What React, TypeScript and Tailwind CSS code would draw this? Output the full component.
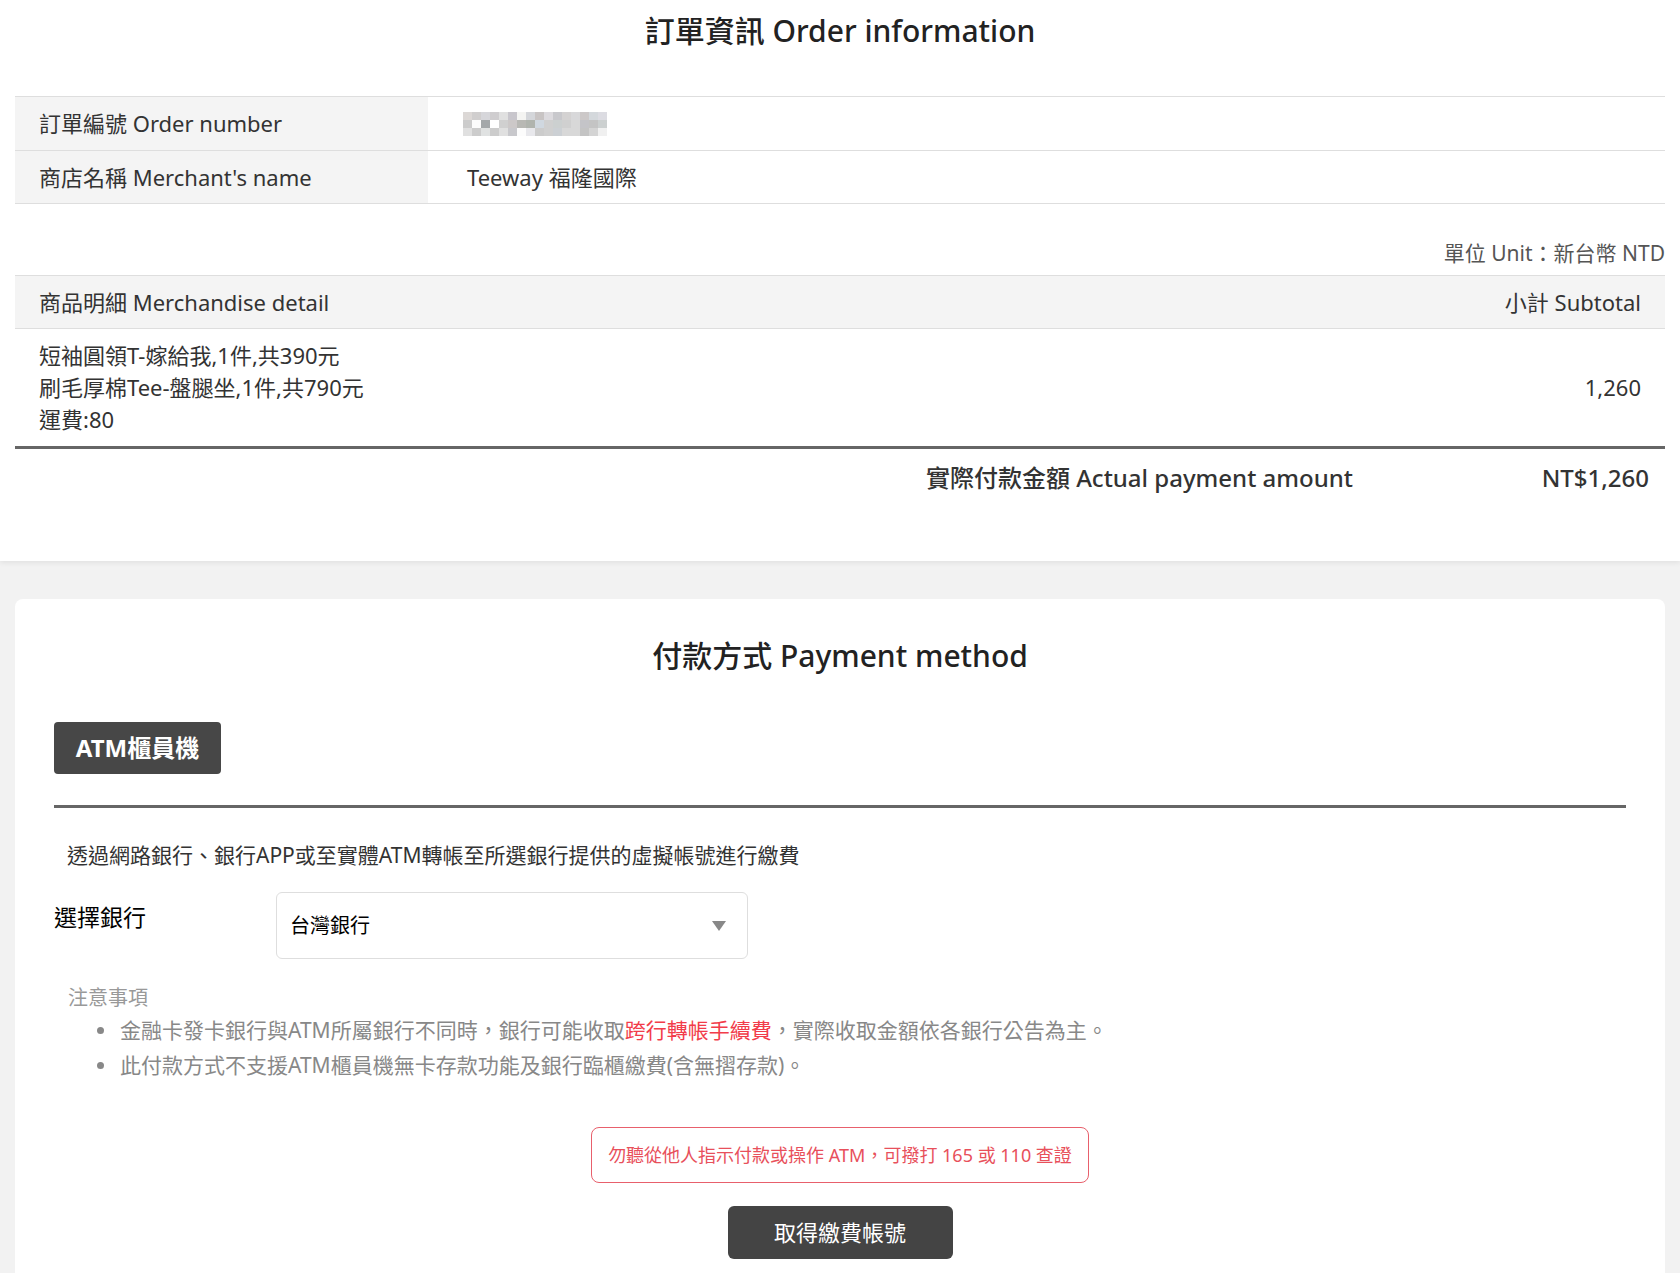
import React from "react";

const FONT = { fontFamily: '"Noto Sans", "Noto Sans CJK TC", sans-serif' };

const mosaic: string[][] = [
  ["#dcd8d6", "#d0cece", "#d6d6da", "#cfcdcf", "#e0e0e0", "#c8c6cc", "#f4f4f2", "#d4d6da", "#c8c4c4", "#dcdade", "#c8c8cc", "#d4d2d2", "#d8d8da", "#ccc8c8", "#d4d8dc", "#dcdce2"],
  ["#cccccc", "#fcfcfc", "#a4a8aa", "#ffffff", "#d0d0d0", "#ccc8c8", "#b8b8b4", "#b0b4ae", "#d0d8e0", "#d0d0d0", "#ccd0d0", "#d0d0d0", "#d8d8d8", "#c4c4c8", "#c4c4c4", "#ccd0d0"],
  ["#e0e0e0", "#cccccc", "#e0e2e2", "#cccccc", "#e0e0e0", "#c8c8cc", "#fcfcfc", "#e8e8ec", "#cccccc", "#d0d0d0", "#ccd0d4", "#d8d8d8", "#d8d8d8", "#c4c4c4", "#d4d4d4", "#f0f0f0"],
];

function Mosaic() {
  return (
    <div className="flex flex-col">
      {mosaic.map((row, i) => (
        <div key={i} className="flex">
          {row.map((c, j) => (
            <div key={j} className="w-[9px] h-[8px]" style={{ backgroundColor: c }} />
          ))}
        </div>
      ))}
    </div>
  );
}

export default function App() {
  return (
    <div className="min-h-[1273px] bg-[#f2f2f2] text-[#333]" style={FONT}>
      {/* Order info section */}
      <div className="bg-white h-[561px] px-[15px] shadow-[0_2px_5px_rgba(0,0,0,0.07)] relative">
        <div className="h-[61px] flex items-center justify-center text-[30px] font-medium text-[#222]">
          訂單資訊 Order information
        </div>
        <div className="mt-[35px] border-t border-[#dedede]">
          <div className="flex h-[54px] border-b border-[#dedede]">
            <div className="w-[413px] bg-[#f4f4f4] flex items-center pl-[24px] text-[22px]">訂單編號 Order number</div>
            <div className="flex items-center pl-[35px]">
              <Mosaic />
            </div>
          </div>
          <div className="flex h-[53px] border-b border-[#dedede]">
            <div className="w-[413px] bg-[#f4f4f4] flex items-center pl-[24px] text-[22px]">商店名稱 Merchant's name</div>
            <div className="flex items-center pl-[39px] text-[22px]">Teeway 福隆國際</div>
          </div>
        </div>
        <div className="pt-[35px] mb-[8px] text-right text-[21px] leading-[28px] text-[#555]">
          單位 Unit：新台幣 NTD
        </div>
        <div className="border-t border-b border-[#dedede] bg-[#f4f4f4] h-[54px] flex items-center justify-between px-[24px] text-[22px]">
          <span>商品明細 Merchandise detail</span>
          <span>小計 Subtotal</span>
        </div>
        <div className="flex items-center justify-between px-[24px] pt-[10px] pb-[11px] text-[22px] leading-[32px] border-b-[3px] border-[#666]">
          <div>
            <div>短袖圓領T-嫁給我,1件,共390元</div>
            <div>刷毛厚棉Tee-盤腿坐,1件,共790元</div>
            <div>運費:80</div>
          </div>
          <div>1,260</div>
        </div>
        <div className="flex justify-end pt-[13px] text-[24px] leading-[32px] font-medium text-[#333]">
          <span>實際付款金額 Actual payment amount</span>
          <span className="w-[312px] text-right pr-[16px]">NT$1,260</span>
        </div>
      </div>

      {/* Payment section */}
      <div className="px-[15px] pt-[38px]">
        <div className="bg-white rounded-lg px-[39px] pt-[37px] pb-[20px] min-h-[700px]">
          <div className="text-center text-[30px] leading-[40px] font-medium text-[#222]">付款方式 Payment method</div>
          <div className="mt-[46px] flex">
            <div className="h-[52px] w-[167px] bg-[#474747] rounded-[4px] text-white text-[24px] font-bold flex items-center justify-center">
              ATM櫃員機
            </div>
          </div>
          <div className="mt-[31px] h-[3px] bg-[#666]" />
          <div className="mt-[32px] pl-[13px] text-[21px] leading-[30px] text-[#333]">
            透過網路銀行、銀行APP或至實體ATM轉帳至所選銀行提供的虛擬帳號進行繳費
          </div>
          <div className="mt-[22px] flex">
            <div className="w-[222px] pt-[10px] text-[23px] leading-[30px] text-black">選擇銀行</div>
            <div className="w-[472px] h-[67px] border border-[#dedede] rounded-[6px] flex items-center justify-between pl-[13px] pr-[21px]">
              <span className="text-[20px] text-black">台灣銀行</span>
              <svg width="14" height="10" viewBox="0 0 14 10">
                <polygon points="0,0 14,0 7,10" fill="#888" />
              </svg>
            </div>
          </div>
          <div className="mt-[24px] pl-[14px] text-[20px] leading-[30px] text-[#999]">注意事項</div>
          <div className="text-[21px] leading-[35px] text-[#888]">
            <div className="flex items-center">
              <span className="ml-[43px] w-[7px] h-[7px] rounded-full bg-[#888] mr-[16px]" />
              <span>
                金融卡發卡銀行與ATM所屬銀行不同時，銀行可能收取<span className="text-[#f23c4a]">跨行轉帳手續費</span>，實際收取金額依各銀行公告為主。
              </span>
            </div>
            <div className="flex items-center">
              <span className="ml-[43px] w-[7px] h-[7px] rounded-full bg-[#888] mr-[16px]" />
              <span>此付款方式不支援ATM櫃員機無卡存款功能及銀行臨櫃繳費(含無摺存款)。</span>
            </div>
          </div>
          <div className="mt-[44px] flex justify-center">
            <div className="w-[498px] h-[56px] border border-[#e8606c] rounded-lg flex items-center justify-center text-[18px] text-[#e8505b]">
              勿聽從他人指示付款或操作 ATM，可撥打 165 或 110 查證
            </div>
          </div>
          <div className="mt-[23px] flex justify-center">
            <div className="w-[225px] h-[53px] bg-[#444] rounded-md flex items-center justify-center text-white text-[22px]">
              取得繳費帳號
            </div>
          </div>
        </div>
      </div>
    </div>
  );
}
